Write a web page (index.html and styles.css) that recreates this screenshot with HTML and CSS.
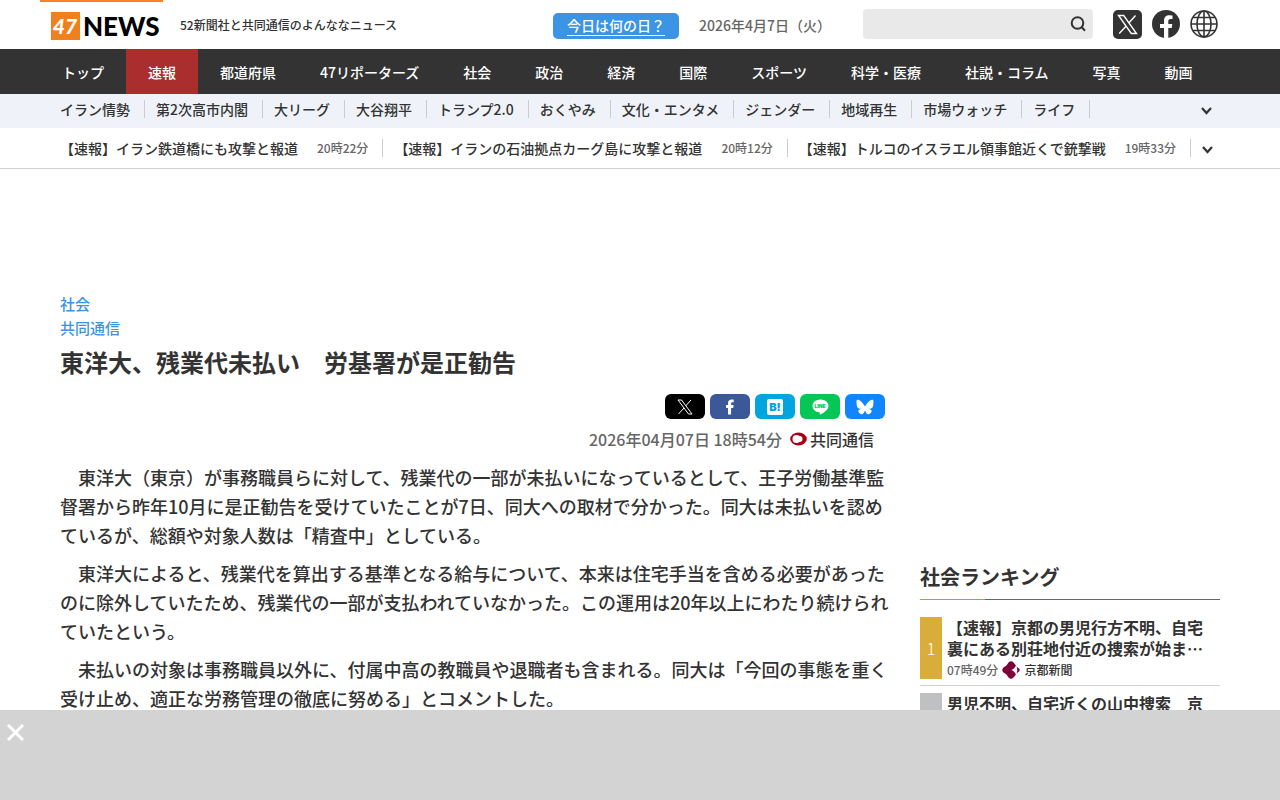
FILE: index.html
```html
<!DOCTYPE html>
<html lang="ja">

<head>
    <meta charset="utf-8">
    <meta name="viewport" content="width=device-width, initial-scale=1.0">
    <title>東洋大、残業代未払い　労基署が是正勧告</title>
    <link rel="stylesheet" href="styles.css">
</head>

<body>
    <header>
        <div class="inner header-inner">
            <a href="#" class="logo" aria-label="47NEWS">
                <svg width="112" height="36" viewBox="0 0 112 36">
                    <rect y="2" width="29" height="28" fill="#f07f1e" />
                    <text class="logo-number" x="14" y="24" text-anchor="middle">47</text>
                    <text class="logo-name" x="32" y="26">NEWS</text>
                </svg>
            </a>
            <p class="tagline">52新聞社と共同通信のよんななニュース</p>
            <a href="#" class="today"><span>今日は何の日？</span></a>
            <p class="date">2026年4月7日（火）</p>
            <form class="search">
                <input type="search" aria-label="検索">
                <button type="button" aria-label="検索する">
                    <svg width="16" height="16" viewBox="0 0 16 16" fill="none" stroke="#333" stroke-width="2">
                        <circle cx="7.500" cy="7" r="5.800" />
                        <path d="M11.500 11l3.500 3.800" />
                    </svg>
                </button>
            </form>
            <div class="sns">
                <a href="#" aria-label="X">
                    <svg width="29" height="29" viewBox="0 0 29 29">
                        <rect width="29" height="29" rx="5" fill="#333" />
                        <path d="M5.500 5.500h5.200l12.800 18h-5.200z M22.500 5.500L15.600 13.200 M13 16.200L6.200 23.500" fill="none" stroke="#fff" stroke-width="1.400" />
                    </svg>
                </a>
                <a href="#" aria-label="Facebook">
                    <svg width="28" height="29" viewBox="0 0 28 29">
                        <circle cx="14" cy="14" r="14" fill="#333" />
                        <path d="M12 29V18H8V14H12V10.700C12 7 14.200 5.200 17.300 5.200C18.800 5.200 20.500 5.500 20.500 5.500V9H18.600C16.900 9 16.300 10 16.300 11.200V14H20.300L19.700 18H16.300V29Z" fill="#fff" />
                    </svg>
                </a>
                <a href="#" aria-label="言語">
                    <svg width="28" height="29" viewBox="0 0 28 29" fill="none" stroke="#333" stroke-width="1.600">
                        <circle cx="14" cy="14" r="13" />
                        <ellipse cx="14" cy="14" rx="7" ry="13" />
                        <path d="M14 1v26M1 14h26M3 7.500h22M3 20.500h22" />
                    </svg>
                </a>
            </div>
        </div>
    </header>

    <nav class="global">
        <ul class="inner">
            <li><a href="#">トップ</a></li>
            <li><a href="#" class="active">速報</a></li>
            <li><a href="#">都道府県</a></li>
            <li><a href="#">47リポーターズ</a></li>
            <li><a href="#">社会</a></li>
            <li><a href="#">政治</a></li>
            <li><a href="#">経済</a></li>
            <li><a href="#">国際</a></li>
            <li><a href="#">スポーツ</a></li>
            <li><a href="#">科学・医療</a></li>
            <li><a href="#">社説・コラム</a></li>
            <li><a href="#">写真</a></li>
            <li><a href="#">動画</a></li>
        </ul>
    </nav>

    <nav class="topics">
        <div class="inner bar">
            <ul>
                <li><a href="#">イラン情勢</a></li>
                <li><a href="#">第2次高市内閣</a></li>
                <li><a href="#">大リーグ</a></li>
                <li><a href="#">大谷翔平</a></li>
                <li><a href="#">トランプ2.0</a></li>
                <li><a href="#">おくやみ</a></li>
                <li><a href="#">文化・エンタメ</a></li>
                <li><a href="#">ジェンダー</a></li>
                <li><a href="#">地域再生</a></li>
                <li><a href="#">市場ウォッチ</a></li>
                <li><a href="#">ライフ</a></li>
            </ul>
            <button type="button" class="more" aria-label="もっと見る">
                <svg width="11" height="8" viewBox="0 0 11 8"><path d="M1 1l4.500 5L10 1" fill="none" stroke="#333" stroke-width="2.200" /></svg>
            </button>
        </div>
    </nav>

    <section class="flash">
        <div class="inner bar">
            <ul>
                <li><a href="#">【速報】イラン鉄道橋にも攻撃と報道</a><time>20時22分</time></li>
                <li><a href="#">【速報】イランの石油拠点カーグ島に攻撃と報道</a><time>20時12分</time></li>
                <li><a href="#">【速報】トルコのイスラエル領事館近くで銃撃戦</a><time>19時33分</time></li>
            </ul>
            <button type="button" class="more" aria-label="もっと見る">
                <svg width="11" height="8" viewBox="0 0 11 8"><path d="M1 1l4.500 5L10 1" fill="none" stroke="#333" stroke-width="2.200" /></svg>
            </button>
        </div>
    </section>

    <div class="inner contents">
        <main>
            <a href="#" class="category">社会</a>
            <a href="#" class="category">共同通信</a>
            <h1>東洋大、残業代未払い　労基署が是正勧告</h1>
            <div class="share">
                <a href="#" class="x" aria-label="Xでシェア">
                    <svg width="16" height="16" viewBox="0 0 16 16"><path d="M1 1h3.500L15 15h-3.500z M14 1L8.800 6.800 M7 9L1.500 15" fill="none" stroke="#fff" /></svg>
                </a>
                <a href="#" class="facebook" aria-label="Facebookでシェア">
                    <svg width="16" height="16" viewBox="0 0 16 16"><path d="M6 15.500V9H4V6H6V4.200C6 1.700 7.500.5 9.600.5C10.800.5 11.700.7 11.700.7V3.300H10.500C9.400 3.300 9.100 3.800 9.100 4.600V6H11.600L11.200 9H9.100V15.500Z" fill="#fff" /></svg>
                </a>
                <a href="#" class="hatena" aria-label="はてなブックマーク">
                    <svg width="16" height="16" viewBox="0 0 16 16">
                        <rect width="16" height="16" rx="2" fill="#fff" />
                        <text class="hatena-mark" x="8" y="12" text-anchor="middle">B!</text>
                    </svg>
                </a>
                <a href="#" class="line" aria-label="LINEで送る">
                    <svg width="17" height="16" viewBox="0 0 17 16">
                        <path d="M8.500.5C4 .5.500 3.300.5 6.900c0 3.200 2.800 5.900 6.700 6.400.9.2.7.8.5 2.400 4-1.900 8.800-5 8.800-8.800C16.500 3.300 13 .5 8.500.5z" fill="#fff" />
                        <text class="line-mark" x="8" y="9" text-anchor="middle">LINE</text>
                    </svg>
                </a>
                <a href="#" class="bluesky" aria-label="Blueskyでシェア">
                    <svg width="18" height="16" viewBox="0 0 18 16"><path d="M4.200 1.800C6.100 3.200 8.200 6 9 7.500c.8-1.500 2.900-4.300 4.800-5.700C15.200.8 17.500 0 17.500 2.500c0 .5-.3 4.300-.5 4.900-.6 2.100-2.700 2.600-4.600 2.300 3.300.6 4.100 2.400 2.300 4.300-3.400 3.500-5-.9-5.700-2.500-.7 1.600-2.300 6-5.700 2.500-1.800-1.900-1-3.700 2.300-4.300-1.900.3-4-.2-4.600-2.300C.8 6.800.5 3 .5 2.500.5 0 2.800.8 4.200 1.800z" fill="#fff" /></svg>
                </a>
            </div>
            <div class="credit">
                <time>2026年04月07日 18時54分</time>
                <a href="#">
                    <svg width="17" height="14" viewBox="0 0 17 14">
                        <ellipse cx="8.500" cy="7" rx="8.300" ry="6.500" fill="#a90016" />
                        <circle cx="6.500" cy="7" r="4" fill="#fff" />
                        <circle cx="9.500" cy="7" r="3" fill="#fff" />
                    </svg>
                    共同通信
                </a>
            </div>
            <div class="text">
                <p>　東洋大（東京）が事務職員らに対して、残業代の一部が未払いになっているとして、王子労働基準監督署から昨年10月に是正勧告を受けていたことが7日、同大への取材で分かった。同大は未払いを認めているが、総額や対象人数は「精査中」としている。</p>
                <p>　東洋大によると、残業代を算出する基準となる給与について、本来は住宅手当を含める必要があったのに除外していたため、残業代の一部が支払われていなかった。この運用は20年以上にわたり続けられていたという。</p>
                <p>　未払いの対象は事務職員以外に、付属中高の教職員や退職者も含まれる。同大は「今回の事態を重く受け止め、適正な労務管理の徹底に努める」とコメントした。</p>
            </div>
        </main>

        <aside>
            <div class="ad"></div>
            <h2>社会ランキング</h2>
            <ol class="ranking">
                <li>
                    <span class="rank gold">1</span>
                    <div class="item">
                        <a href="#" class="item-title">【速報】京都の男児行方不明、自宅裏にある別荘地付近の捜索が始ま…</a>
                        <p class="item-info">
                            <time>07時49分</time>
                            <svg width="18" height="18" viewBox="0 0 18 18">
                                <path d="M6.500 1.500Q9-1 11.500 1.500L14 4.500 12 7.500 9.500 9 12 10.500 14 13.500 11.500 16.500Q9 19 6.500 16.500L4.500 13.500 1.500 11.500Q-1 9 1.500 6.500L4.500 4.500z" fill="#7d003c" />
                                <path d="M14.500 5.500L17 7.500Q18.500 9 17 10.500L14.500 12.500Q16 9 14.500 5.500z" fill="#7d003c" />
                            </svg>
                            <span>京都新聞</span>
                        </p>
                    </div>
                </li>
                <li>
                    <span class="rank silver">2</span>
                    <div class="item">
                        <a href="#" class="item-title">男児不明、自宅近くの山中捜索　京都府警</a>
                    </div>
                </li>
            </ol>
        </aside>
    </div>

    <div class="overlay">
        <button type="button" aria-label="閉じる">
            <svg width="17" height="17" viewBox="0 0 17 17"><path d="M1 1l15 15M16 1L1 16" stroke="#fff" stroke-width="3" /></svg>
        </button>
    </div>
</body>

</html>
```
FILE: styles.css
```css
* {
    margin: 0;
    padding: 0;
    box-sizing: border-box;
}

body {
    font-family: "Noto Sans CJK JP", sans-serif;
    font-weight: 500;
    color: #333;
    background: #fff;
}

a {
    color: inherit;
    text-decoration: none;
}

ul,
ol {
    list-style: none;
}

button {
    border: 0;
    background: none;
    cursor: pointer;
}

svg {
    display: block;
}

.inner {
    max-width: 1200px;
    margin: 0 auto;
}

/* header */

.header-inner {
    display: flex;
    height: 49px;
    align-items: center;
    padding-right: 22px;
}

.logo {
    align-self: stretch;
    width: 123px;
    padding: 8px 0 0 11px;
    border-top: 2px solid #ff7f27;
}

.logo-number {
    font: italic 900 21px Lato, sans-serif;
    fill: #fff;
}

.logo-name {
    font: 900 26px Lato, sans-serif;
    fill: #000;
}

.tagline {
    font-size: 12px;
    margin-left: 17px;
}

.today {
    margin: 2px 0 0 auto;
    padding: 2px 14px 3px;
    border-radius: 5px;
    background: #3b94e4;
    color: #fff;
    font-size: 14px;
    line-height: 20px;
}

.today span {
    display: block;
    border-bottom: 1px solid #fff;
}

.date {
    width: 144px;
    margin: 0 20px;
    font-size: 14px;
    color: #666;
}

.search {
    display: flex;
    width: 230px;
    height: 30px;
    margin-bottom: 2px;
    border-radius: 4px;
    background: #e9e9e9;
}

.search input {
    flex: 1;
    min-width: 0;
    border: 0;
    padding: 0 8px;
    background: none;
}

.search button {
    padding: 0 7px;
}

.sns {
    display: flex;
    gap: 10px;
    margin-left: 20px;
}

/* navigation */

.global {
    background: #333;
    color: #fff;
}

.global ul {
    display: flex;
}

.global a {
    display: block;
    padding: 1px 22px 0;
    font-size: 14px;
    line-height: 44px;
}

.global .active {
    background: #aa2e2e;
}

.topics {
    background: #eff3f9;
}

.bar {
    display: flex;
    justify-content: space-between;
    padding: 0 28px 0 20px;
    font-size: 14px;
    line-height: 18px;
}

.bar ul {
    display: flex;
}

.bar li {
    display: flex;
    align-items: center;
    padding-right: 14px;
    margin-right: 11px;
    border-right: 1px solid #ccc;
    white-space: nowrap;
}

.more {
    padding-top: 3px;
}

.topics .bar {
    padding-top: 6px;
    padding-bottom: 10px;
}

.flash {
    border-bottom: 1px solid #d3d3d3;
}

.flash .bar {
    padding-top: 11px;
    padding-bottom: 11px;
}

.flash time {
    margin-left: 19px;
    font-size: 12px;
    color: #666;
}

/* article */

.contents {
    display: flex;
    justify-content: space-between;
    gap: 28px;
    padding: 123px 20px 0;
}

main {
    flex: 1;
}

.category {
    display: block;
    font-size: 15px;
    line-height: 24px;
    color: #3b94e4;
}

h1 {
    margin-top: 4px;
    font-size: 24px;
    line-height: 36px;
}

.share {
    display: flex;
    justify-content: flex-end;
    gap: 5px;
    margin: 14px 7px 0 0;
}

.share a {
    display: flex;
    justify-content: center;
    align-items: center;
    width: 40px;
    height: 25px;
    border-radius: 6px;
}

.x {
    background: #000;
}

.facebook {
    background: #3b5998;
}

.hatena {
    background: #00a4de;
}

.line {
    background: #06c755;
}

.bluesky {
    background: #1185fe;
}

.hatena-mark {
    font: 900 11px Inter, sans-serif;
    fill: #00a4de;
}

.line-mark {
    font: 900 5px Inter, sans-serif;
    fill: #06c755;
}

.credit {
    display: flex;
    justify-content: flex-end;
    gap: 8px;
    margin: 8px 18px 12px 0;
    font-size: 16px;
    line-height: 24px;
}

.credit time {
    color: #666;
}

.credit a {
    display: flex;
    align-items: center;
    gap: 3px;
}

.text p {
    margin-bottom: 9px;
    font-size: 18px;
    line-height: 29px;
}

/* sidebar */

aside {
    width: 300px;
}

.ad {
    height: 250px;
    margin-bottom: 20px;
}

h2 {
    padding-bottom: 8px;
    margin-bottom: 17px;
    font-size: 20px;
    line-height: 30px;
    background: linear-gradient(to right, #ff7f27 65px, #666 65px) bottom / 100% 1px no-repeat;
}

.ranking li {
    display: flex;
    gap: 5px;
    padding-bottom: 6px;
    margin-bottom: 7px;
    border-bottom: 1px solid #d3d3d3;
}

.rank {
    display: flex;
    justify-content: center;
    align-items: center;
    width: 22px;
    height: 62px;
    font-size: 16px;
    font-weight: 300;
    color: #fff;
}

.gold {
    background: #d9ad3a;
}

.silver {
    background: #bfc0c2;
}

.item {
    flex: 1;
    padding-right: 8px;
}

.item-title {
    display: block;
    font-size: 16px;
    font-weight: 700;
    line-height: 21px;
}

.item-info {
    display: flex;
    align-items: center;
    gap: 4px;
    margin-top: 2px;
    font-size: 12px;
    line-height: 18px;
}

.item-info time {
    color: #666;
}

/* fixed banner */

.overlay {
    position: fixed;
    left: 0;
    right: 0;
    bottom: 0;
    height: 90px;
    padding: 12px 7px;
    background: #d3d3d3;
}
```
